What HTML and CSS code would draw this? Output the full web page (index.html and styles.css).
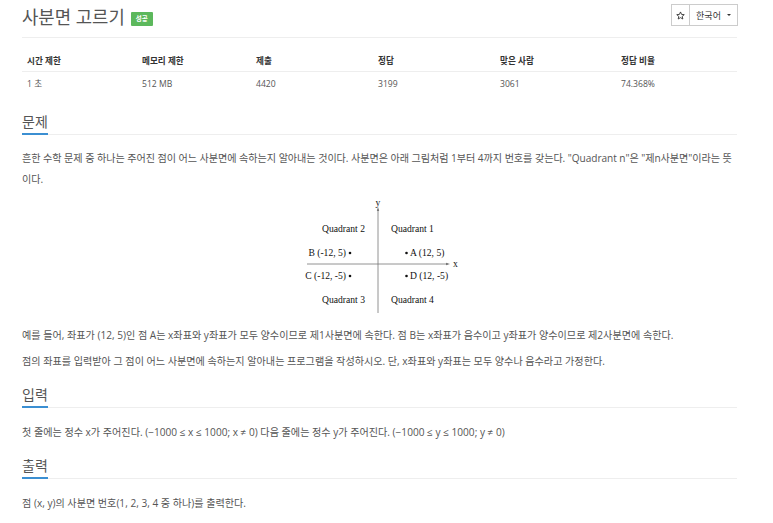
FILE: index.html
```html
<!DOCTYPE html>
<html lang="ko">
<head>
<meta charset="utf-8">
<title>사분면 고르기</title>
<link rel="stylesheet" href="styles.css">
</head>
<body>
<div class="container">
  <div class="page-header">
    <h1 class="title">사분면 고르기 <span class="badge">성공</span></h1>
    <div class="btn-group">
      <button class="btn btn-star" type="button">
        <svg width="9" height="9" viewBox="0 0 24 24"><path d="M12 2.5l2.9 6.6 7.1.6-5.4 4.7 1.6 7-6.2-3.7-6.2 3.7 1.6-7L2 9.7l7.1-.6z" fill="none" stroke="#333" stroke-width="2.4" stroke-linejoin="round"/></svg>
      </button>
      <button class="btn btn-lang" type="button">한국어 <span class="caret"></span></button>
    </div>
  </div>

  <div class="info-table">
    <div class="th">시간 제한</div>
    <div class="th">메모리 제한</div>
    <div class="th">제출</div>
    <div class="th">정답</div>
    <div class="th">맞은 사람</div>
    <div class="th">정답 비율</div>
    <div class="td">1 초</div>
    <div class="td">512 MB</div>
    <div class="td">4420</div>
    <div class="td">3199</div>
    <div class="td">3061</div>
    <div class="td">74.368%</div>
  </div>

  <section class="section first">
    <h2 class="headline"><span>문제</span></h2>
    <p class="text tight">흔한 수학 문제 중 하나는 주어진 점이 어느 사분면에 속하는지 알아내는 것이다. 사분면은 아래 그림처럼 1부터 4까지 번호를 갖는다. "Quadrant n"은 "제n사분면"이라는 뜻이다.</p>
    <div class="figure">
      <svg class="diagram" width="180" height="118" viewBox="0 0 180 118">
        <g stroke="#777" stroke-width="0.8" fill="none">
          <line x1="88" y1="12" x2="88" y2="116"/>
          <line x1="17" y1="67" x2="158" y2="67"/>
        </g>
        <path d="M88 10 L86.8 14 L89.2 14 Z" fill="#777"/>
        <path d="M160 67 L156 65.8 L156 68.2 Z" fill="#777"/>
        <g class="dtext" font-family="'Liberation Serif', serif" font-size="9.6" fill="#111">
          <text x="85.5" y="9">y</text>
          <text x="163" y="70">x</text>
          <text x="75" y="35" text-anchor="end">Quadrant 2</text>
          <text x="101" y="35">Quadrant 1</text>
          <text x="56" y="59" text-anchor="end">B (-12, 5)</text>
          <text x="120" y="59">A (12, 5)</text>
          <text x="56" y="82" text-anchor="end">C (-12, -5)</text>
          <text x="120" y="82">D (12, -5)</text>
          <text x="75" y="106" text-anchor="end">Quadrant 3</text>
          <text x="101" y="106">Quadrant 4</text>
        </g>
        <g fill="#111">
          <circle cx="60" cy="56" r="1.3"/>
          <circle cx="116.5" cy="56" r="1.3"/>
          <circle cx="60" cy="79" r="1.3"/>
          <circle cx="116.5" cy="79" r="1.3"/>
        </g>
      </svg>
    </div>
    <p class="text">예를 들어, 좌표가 (12, 5)인 점 A는 x좌표와 y좌표가 모두 양수이므로 제1사분면에 속한다. 점 B는 x좌표가 음수이고 y좌표가 양수이므로 제2사분면에 속한다.</p>
    <p class="text">점의 좌표를 입력받아 그 점이 어느 사분면에 속하는지 알아내는 프로그램을 작성하시오. 단, x좌표와 y좌표는 모두 양수나 음수라고 가정한다.</p>
  </section>

  <section class="section">
    <h2 class="headline"><span>입력</span></h2>
    <p class="text">첫 줄에는 정수 x가 주어진다. (−1000 ≤ x ≤ 1000; x ≠ 0) 다음 줄에는 정수 y가 주어진다. (−1000 ≤ y ≤ 1000; y ≠ 0)</p>
  </section>

  <section class="section">
    <h2 class="headline"><span>출력</span></h2>
    <p class="text">점 (x, y)의 사분면 번호(1, 2, 3, 4 중 하나)를 출력한다.</p>
  </section>
</div>
</body>
</html>
```

FILE: styles.css
```css
html, body {
  margin: 0;
  padding: 0;
  background: #fff;
}

body {
  font-family: "Open Sans", "Noto Sans CJK KR", sans-serif;
  color: #555;
}

.container {
  width: 715px;
  margin-left: 22px;
}

.page-header {
  display: flex;
  justify-content: space-between;
  align-items: flex-start;
  height: 37px;
  border-bottom: 1px solid #eee;
}

.title {
  margin: 0;
  padding-top: 4px;
  font-size: 17.8px;
  line-height: 26px;
  font-weight: 400;
  color: #555;
  display: flex;
  align-items: center;
  gap: 6px;
}

.badge {
  display: inline-block;
  background: #5cb85c;
  color: #fff;
  font-size: 6.5px;
  font-weight: 700;
  line-height: 14px;
  height: 14px;
  width: 22px;
  text-align: center;
  border-radius: 1px;
  margin-top: 3px;
}

.btn-group {
  display: flex;
  margin-top: 4px;
  margin-right: -1px;
}

.btn {
  height: 22px;
  border: 1px solid #ccc;
  background: #fff;
  color: #333;
  font-family: "Open Sans", "Noto Sans CJK KR", sans-serif;
  font-size: 9px;
  padding: 0;
  display: flex;
  align-items: center;
  justify-content: center;
}

.btn-star {
  width: 19px;
}

.btn-lang {
  width: 49px;
  margin-left: -1px;
  gap: 6px;
}

.caret {
  width: 0;
  height: 0;
  border-left: 2.5px solid transparent;
  border-right: 2.5px solid transparent;
  border-top: 2.5px solid #333;
}

.info-table {
  display: grid;
  grid-template-columns: 115px 114px 122px 122px 121px 121px;
  margin-top: 12px;
  font-size: 8.6px;
}

.th, .td {
  padding-left: 5px;
  box-sizing: border-box;
}

.th {
  height: 22px;
  line-height: 22px;
  font-weight: 700;
  color: #333;
  border-bottom: 1px solid #eee;
}

.td {
  height: 24px;
  line-height: 24px;
  color: #555;
}

.section {
  margin-top: 13px;
}

.section.first {
  margin-top: 16px;
}

.headline {
  margin: 0 0 14px;
  font-size: 14px;
  line-height: 20px;
  font-weight: 400;
  color: #555;
  border-bottom: 1px solid #eee;
  display: flex;
}

.section.first .headline {
  margin-bottom: 13px;
}

.headline span {
  display: block;
  padding-bottom: 1px;
  border-bottom: 2px solid #3b8fd2;
  margin-bottom: -1px;
}

.text {
  margin: 0 0 5px;
  font-size: 10.1px;
  line-height: 21px;
  color: #555;
}

.text.tight {
  letter-spacing: -0.05px;
}

.figure {
  display: flex;
  justify-content: center;
  margin: 7px 0 10px;
}

.diagram {
  display: block;
}
```
